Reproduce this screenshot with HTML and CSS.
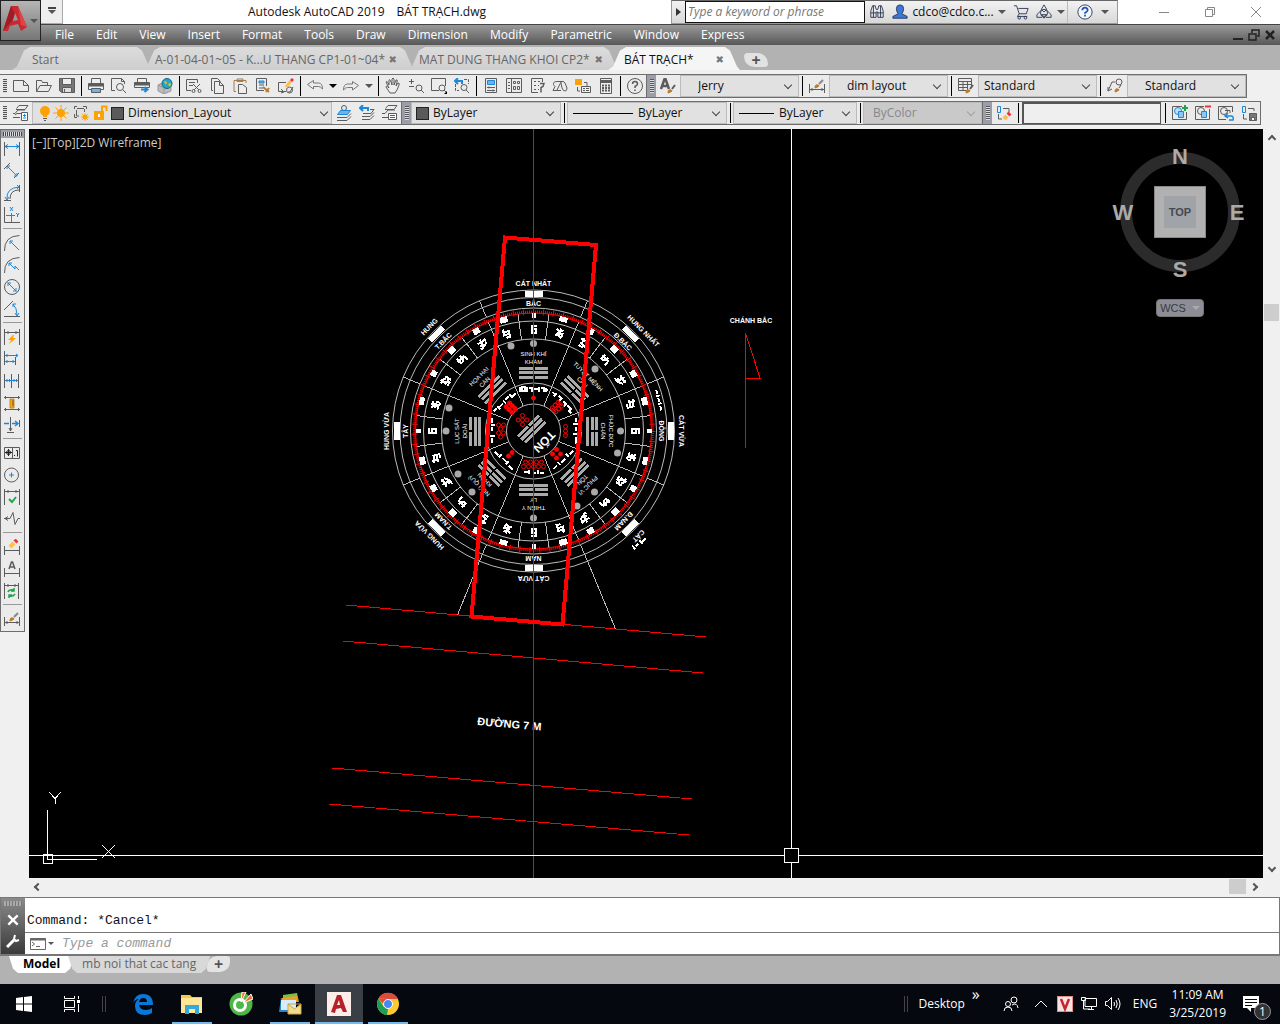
FILE: index.html
```html
<!DOCTYPE html>
<html lang="en">
<head>
  <meta charset="UTF-8" />
  <meta name="viewport" content="width=device-width, initial-scale=1.0"/>
  <title>Autodesk AutoCAD 2019 - BÁT TRẠCH.dwg</title>
  <link rel="stylesheet" href="styles.css">
</head>
<body>

  <!-- Icon sprite -->
  <svg class="sprite" aria-hidden="true">
    <symbol id="i-new" viewBox="0 0 16 16"><path d="M.5 2.500h10l5 5v6H.5zM10.500 2.500v5h5"/></symbol>
    <symbol id="i-open" viewBox="0 0 16 16"><path d="M.5 13.500V2.500h5l1 2h5v3M.5 13.500l3.500-6h11.500l-3 6z"/></symbol>
    <symbol id="i-save" viewBox="0 0 16 16"><path d="M.5.5h15v14h-13l-2-2z" fill="#777"/><path d="M3.500.5h9v6h-9z" fill="#eee"/><path d="M3.500 9.500h9v5h-9z" fill="#ddd"/><path d="M5.500 11v3"/></symbol>
    <symbol id="i-print" viewBox="0 0 16 16"><path d="M3.500 5V.5h9V5M.5 5.500h15v6H.5z" fill="#eee"/><path d="M1 7h14" stroke-width="3"/><path d="M3.500 10.500h9v4h-9z" fill="#6db3ea"/></symbol>
    <symbol id="i-preview" viewBox="0 0 16 16"><path d="M4 12.500H.5V.5h10l3 3V6M10.500.5v3h3"/><circle cx="9" cy="9" r="3.500" fill="#eee"/><path d="M12 12l3 3"/></symbol>
    <symbol id="i-publish" viewBox="0 0 16 16"><path d="M3.500 4V.5h9V4M.5 4.500h15v5H.5z" fill="#eee"/><path d="M1 6h14" stroke-width="3"/><path d="M7 11.500h6M10.500 9l3 2.500-3 2.500" class="blue" stroke-width="2"/></symbol>
    <symbol id="i-globe" viewBox="0 0 16 16"><path d="M1 7l6-3 7 3v6l-7 3-6-3z" fill="#bbb" stroke="#999"/><path d="M1 7l6 3v6" stroke="#999"/><circle cx="10" cy="5.500" r="5" fill="#27a6c4" stroke="#168"/><path d="M7 3l3 1-1 3zM11 6l3-1-1 4z" fill="#f4c430" stroke="none"/></symbol>
    <symbol id="i-cut" viewBox="0 0 16 16"><path d="M5 12.500H.5V1.500h11V5M3 4.500h6M3 7.500h4M7 6l6 6M14 6l-6 6"/><circle cx="7.500" cy="13" r="1.500"/><circle cx="13.500" cy="13" r="1.500"/></symbol>
    <symbol id="i-copy" viewBox="0 0 16 16"><path d="M4 12.500H2.500V.5h6l3 3"/><path d="M5.500 3.500h5l4 4v8h-9zM10.500 3.500v4h4"/></symbol>
    <symbol id="i-paste" viewBox="0 0 16 16"><path d="M4 13.500H2V2.500h12V5M5 3.500h6V1H5z" stroke="#a57c4c"/><path d="M6.500 6.500h4l4 3v6h-8z" fill="#eee"/></symbol>
    <symbol id="i-match" viewBox="0 0 16 16"><path d="M9 12.500H1.500V.5h10V8M4 7h5M4 10h4"/><path d="M4 3h5v2H4z" fill="#6db3ea" stroke="#1e88d8"/><path d="M8 9l6 5M11 14l3-4" stroke="#b97b2d" stroke-width="2"/></symbol>
    <symbol id="i-block" viewBox="0 0 16 16"><path d="M8 4.500H.5v9H8M3 11l3 3-3 1M15 9l-3 5h-2"/><circle cx="11.500" cy="12" r="3"/><path d="M8 9l5-6" stroke="#fbc04d" stroke-width="3"/><path d="M13 3l2-2" stroke="#e33" stroke-width="3"/></symbol>
    <symbol id="i-undo" viewBox="0 0 16 16"><path d="M.5 6.500l6-4v2.500h5q4 0 4 6-2-2.500-4-2.500h-5v2.500z" stroke="#777"/></symbol>
    <symbol id="i-redo" viewBox="0 0 16 16"><path d="M15.500 7.500l-6-4v2.500h-5q-4 0-4 6 2-2.500 4-2.500h5V12z" stroke="#777"/></symbol>
    <symbol id="i-pan" viewBox="0 0 16 16"><path d="M5 15L1 9q0-2 3 1L1 4q1-2 3 3L4 2q1-2 3 5V1q1-2 2 0v6l2-5q2-1 1 2l-1 4 2-3q2 0 1 2l-2 5-2 3z" fill="#eee"/></symbol>
    <symbol id="i-zoomrt" viewBox="0 0 16 16"><path d="M1 3.500h5M3.500 1v5M1 8.500h5"/><circle cx="11" cy="10" r="3"/><path d="M13 12l3 3"/></symbol>
    <symbol id="i-zoomwin" viewBox="0 0 16 16"><path d="M8 12.500H.5V.5h14V8"/><circle cx="11" cy="10" r="3" fill="#eee"/><path d="M13 12l2 2"/><path d="M13 16h3v-3z" fill="#000" stroke="none"/></symbol>
    <symbol id="i-zoomprev" viewBox="0 0 16 16"><path d="M10 1.500h4.500V6M1.500 6v6.500H5" stroke-dasharray="3 1"/><path d="M1 3h7v3M4 0L1 3l3 3" class="blue" stroke-width="2"/><circle cx="10" cy="9.500" r="3"/><path d="M12 12l3 3"/></symbol>
    <symbol id="i-props" viewBox="0 0 16 16"><path d="M2.500.5h11v14h-11zM4 9.500h8M4 12.500h8M6 8.500v2M10 11.500v2"/><path d="M4.500 2.500h7v4h-7z" fill="#6db3ea" stroke="#1e88d8"/></symbol>
    <symbol id="i-design" viewBox="0 0 16 16"><path d="M.5.5h15v14H.5zM5.500.5v14M2 4.500h2M2 7.500h2M2 10.500h2"/><path d="M7.500 3.500h2v2h-2zM11.500 3.500h2v2h-2zM7.500 8.500h2v3h-2zM11.500 8.500h2v3h-2z"/></symbol>
    <symbol id="i-palette" viewBox="0 0 16 16"><path d="M9 14.500H2.500V.5h11V4M5 3.500h2M9 3.500h2M5 7.500h2M5 11.500h2M9 7.500h1M9 11.500h1"/><path d="M11 5.500h4l-1 3-2 1v5" stroke-width="1.500"/></symbol>
    <symbol id="i-sheet" viewBox="0 0 16 16"><path d="M11 3.500H5q-4 0-3.500 3 .5 1 1.500 2l-2 4h8M5 12l4-8q2-2 4 1l2 5q0 3-2 3t-3-3L9 5"/></symbol>
    <symbol id="i-markup" viewBox="0 0 16 16"><path d="M0 1h7v6H0z" fill="#ffa200" stroke="none"/><path d="M9 4.500h3V9M2.500 9v4H5"/><path d="M6.500 8.500h9v6h-9zM8 10.500h2M8 12.500h2M11 10.500h3M11 12.500h3" fill="#eee"/></symbol>
    <symbol id="i-calc" viewBox="0 0 16 16"><path d="M2.500.5h11v15h-11z" fill="#eee"/><path d="M3 3.500h10" stroke-width="3"/><path d="M4 7.500h8M4 10h8M4 12.500h8" stroke-dasharray="2 1" stroke-width="2"/></symbol>
    <symbol id="i-help" viewBox="0 0 16 16"><circle cx="8" cy="8" r="7.500"/><path d="M5.500 6q0-2.500 2.500-2.500T10.500 6Q10.500 7 8 8.500V10M8 11.500v1.500" stroke-width="1.500"/></symbol>
    <symbol id="i-textstyle" viewBox="0 0 16 16"><path d="M1 11L4.500 1h1L9 11M2.500 8h5" stroke-width="2.500"/><path d="M8 15q0-4 3-3t-3 3" fill="#b97b2d" stroke="#b97b2d"/><path d="M12 11l3-4" stroke-width="2"/></symbol>
    <symbol id="i-dimstyle" viewBox="0 0 16 16"><path d="M.5 6v9M15.500 6v9M1 11.500h14M3 10v3M13 10v3"/><path d="M6 10q0-4 3-3t-3 3" fill="#b97b2d" stroke="#b97b2d"/><path d="M10 6l4-4" stroke="#888" stroke-width="2"/></symbol>
    <symbol id="i-tablestyle" viewBox="0 0 16 16"><path d="M10 12.500H.5V.5h13V8M.5 3.500h13M.5 6.500h13M.5 9.500h9M5 3.500v9M9.500 3.500v9"/><path d="M8 15q0-4 3-3t-3 3" fill="#b97b2d" stroke="#b97b2d"/><path d="M12 11l3-4" stroke-width="2"/></symbol>
    <symbol id="i-leader" viewBox="0 0 16 16"><path d="M1 13L5 4h3M1 9v4l4-2"/><circle cx="12" cy="4" r="3"/><path d="M8 14q0-4 3-3t-3 3" fill="#b97b2d" stroke="#b97b2d"/><path d="M12 10l2-3"/></symbol>
    <symbol id="i-layers" viewBox="0 0 16 16"><path d="M3.500 3.500L6 .5h9l-3 4H3M0 8.500h2L5 5h7M0 12.500h7M2 10l2-1.500h4"/><path d="M8.500 7.500h6v8h-6z" fill="#fff"/><path d="M10 10.500h3M10 13h3M11.500 9v3" class="blue"/></symbol>
    <symbol id="i-bulb" viewBox="0 0 16 16"><circle cx="8" cy="6" r="5" fill="#ffa200" stroke="none"/><path d="M6 10h4v2H6z" fill="#ffa200" stroke="none"/><path d="M6 13.500h4M7 15.500h2"/></symbol>
    <symbol id="i-sun" viewBox="0 0 16 16"><circle cx="8" cy="8" r="4" fill="#ffa200" stroke="none"/><path d="M8 0v16M0 8h16M2.500 2.500l11 11M13.500 2.500l-11 11" stroke="#ffa200"/></symbol>
    <symbol id="i-vpfreeze" viewBox="0 0 16 16"><path d="M4 1.500H1.500V4M10 1.500h3.500V4M1.500 9v3.500H4M4 3.500h7M3.500 5v6H6M11.500 4v3"/><circle cx="12" cy="12" r="2.500" fill="#ffa200" stroke="none"/><path d="M12 8v8M8 12h8M9 9l6 6M15 9l-6 6" stroke="#ffa200" stroke-width=".8"/></symbol>
    <symbol id="i-lock" viewBox="0 0 16 16"><path d="M1 6h10v9H1z" fill="#ffa200" stroke="none"/><path d="M9 6V1.500h4.500V6" stroke="#ffa200" stroke-width="2"/><path d="M6 9v3" stroke="#fff" stroke-width="2"/></symbol>
    <symbol id="i-laycur" viewBox="0 0 16 16"><circle cx="8" cy="3" r="2.500"/><path d="M4.500 5.500h10l-3 4h-10z" fill="#6db3ea" stroke="#1e88d8"/><path d="M1 12.500h10l4-4M1 15.500h10l4-4"/></symbol>
    <symbol id="i-layprev" viewBox="0 0 16 16"><path d="M1 3h8v3M4 0L1 3l3 3" class="blue" stroke-width="2"/><path d="M11 4.500h4l-3 4H4M3 11.500h8l4-4M3 14.500h8l4-4"/></symbol>
    <symbol id="i-laystate" viewBox="0 0 16 16"><path d="M3.500 3.500L6 .5h9l-3 4H3M0 8.500h3L6 5h7M0 12.500h6"/><path d="M6.500 8.500h8v6h-8zM8 10.500h5M8 12.500h5" fill="#fff"/></symbol>
    <symbol id="i-refedit" viewBox="0 0 16 16"><path d="M1.500 5V1.500h3v6h-3V4" class="blue"/><path d="M7 3.500h6V7M2.500 9v5H6"/><path d="M8 14l3-3" stroke="#fbc04d" stroke-width="4"/><path d="M12 10l2-2" stroke="#e33" stroke-width="4"/></symbol>
    <symbol id="i-refadd" viewBox="0 0 16 16"><path d="M10 1.500H.5v13h14V7"/><circle cx="6" cy="6" r="3.500" fill="#bfe0f8" class="blue"/><path d="M6.500 6.500h5v6h-5z" fill="#8cc6f2" stroke="#1e88d8"/><path d="M13 0v6M10 3h6" stroke="#1ea54a" stroke-width="2"/></symbol>
    <symbol id="i-refrem" viewBox="0 0 16 16"><path d="M9 1.500H.5v13h14V4"/><circle cx="6" cy="6" r="3.500"/><path d="M6.500 6.500h5v6h-5z" fill="#8cc6f2" stroke="#1e88d8"/><path d="M10 1.500h6" stroke="#e33" stroke-width="2"/></symbol>
    <symbol id="i-refclose" viewBox="0 0 16 16"><path d="M8 14.500H.5v-13h14V7"/><circle cx="6" cy="6" r="3.500"/><path d="M7 5.500h5V8"/><path d="M10 8l-3 3 3 2M7 11h6q3 0 2 4h-4" class="blue" stroke-width="1.500"/></symbol>
    <symbol id="i-refsave" viewBox="0 0 16 16"><path d="M1.500 5V1.500h3v6h-3V4" class="blue"/><path d="M7 3.500h6V6M2.500 9v5H6"/><path d="M8.500 8.500h7v7h-7z" fill="#777"/><path d="M10.500 12.500h3v3h-3z" fill="#fff"/></symbol>

    <!-- dimension toolbar -->
    <symbol id="d-linear" viewBox="0 0 16 16"><path d="M.5 1v14M15.500 1v14"/><path d="M1 5.500h14M4 3.500l-3 2 3 2M12 3.500l3 2-3 2" class="blue"/></symbol>
    <symbol id="d-aligned" viewBox="0 0 16 16"><path d="M0 6l6-6M10 15l5-5"/><path d="M3 3l10 10M3 6V3h3M10 13h3v-3" class="blue"/></symbol>
    <symbol id="d-arc" viewBox="0 0 16 16"><path d="M0 15.500h7M15.500 0v7M6 14q0-9 9-9"/><path d="M3 14Q2 3 15 2M1 12l2 3 2-3M13 0l2 2-2 2" class="blue"/></symbol>
    <symbol id="d-ordinate" viewBox="0 0 16 16"><path d="M.5 0v15.500H16"/><path d="M2 8.500h9M7.500 6v9M6 0l3 4M9 0L6 4M12 6l2 2 1-2M13.500 8v2" class="blue"/></symbol>
    <symbol id="d-radius" viewBox="0 0 16 16"><path d="M.5 16Q0 1 15.500.5"/><path d="M15 15L6 6M6 9V6h3" class="blue"/></symbol>
    <symbol id="d-jogged" viewBox="0 0 16 16"><path d="M.5 16Q0 1 15.500.5"/><path d="M15 13l-4-4v3L5 6M5 9V6h3" class="blue"/></symbol>
    <symbol id="d-diameter" viewBox="0 0 16 16"><circle cx="8" cy="8" r="7.500"/><path d="M3.500 3.500l9 9M4 7V4h3M9 12h3V9" class="blue"/></symbol>
    <symbol id="d-angular" viewBox="0 0 16 16"><path d="M0 9l9-9M0 15.500h16"/><path d="M9 3q4 4 4 11M9 6V3h3M11 12l2 3 2-3" class="blue"/></symbol>
    <symbol id="d-quick" viewBox="0 0 16 16"><path d="M.5 0v16M15.500 0v16M1 3.500h14M4 2v3M12 2v3"/><path d="M9 6l-5 5h3l-2 4 7-6H9l1-3z" fill="#ffa200" stroke="none"/></symbol>
    <symbol id="d-baseline" viewBox="0 0 16 16"><path d="M.5 0v14M11.500 6v8"/><path d="M1 4.500h13M3 3v3M12 3l2 1.500L12 6M1 10.500h10M3 9v3M9 9v3" class="blue"/></symbol>
    <symbol id="d-continue" viewBox="0 0 16 16"><path d="M.5 1v14M7.500 1v14M14.500 1v14"/><path d="M1 7.500h13M3 6v3M5.500 6v3M10 6v3M12.500 6v3" class="blue"/></symbol>
    <symbol id="d-space" viewBox="0 0 16 16"><path d="M0 2.500h16M0 14.500h16M1.500 1v3M14.500 1v3M1.500 13v3M14.500 13v3"/><path d="M6 4h4v9H6z" fill="#ffa200" stroke="#c78a1a"/><path d="M8 6h2M8 8h2M8 10h2"/></symbol>
    <symbol id="d-break" viewBox="0 0 16 16"><path d="M6.500 0v14M3 15.500h7M5 11l1.500 3L8 11M15.500 3v7"/><path d="M0 6.500h5M8 6.500h6M11 4l3 2.500L11 9" class="blue" stroke-width="1.500"/></symbol>
    <symbol id="d-tolerance" viewBox="0 0 16 16"><path d="M.5 2.500h15v11H.5zM8.500 3v10"/><path d="M4.500 4v7M1 7.500h7M10 10.500h1M12 5.500h1.500v6" stroke="#222"/><circle cx="4.500" cy="7.500" r="2" stroke="#222"/></symbol>
    <symbol id="d-center" viewBox="0 0 16 16"><circle cx="7.500" cy="8" r="7"/><path d="M5 8h5M7.500 5.500v5" class="blue"/></symbol>
    <symbol id="d-inspect" viewBox="0 0 16 16"><path d="M.5 0v16M15.500 0v16M1 2.500h14M4 1v3M12 1v3"/><path d="M5 10l3 3 4-5" stroke="#1ea54a" stroke-width="2"/></symbol>
    <symbol id="d-jogline" viewBox="0 0 16 16"><path d="M0 7.500h6l3-6 2 12 3-6h2M4 5.500l-3 2 3 2"/></symbol>
    <symbol id="d-edit" viewBox="0 0 16 16"><path d="M.5 7v9M15.500 7v9M1 11.500h14"/><path d="M6 8l4-4" stroke="#fbc04d" stroke-width="4"/><path d="M11 3l2-2" stroke="#e33" stroke-width="4"/></symbol>
    <symbol id="d-text" viewBox="0 0 16 16"><path d="M.5 7v9M15.500 7v9M1 12.500h14"/><path d="M5 8l2.500-7h1L11 8M6 6h4" stroke-width="1.500"/></symbol>
    <symbol id="d-update" viewBox="0 0 16 16"><path d="M.5 0v16M14.500 0v16M1 2.500h13M4 1v3M11 1v3"/><path d="M4 9q1-3 6-2M10 5v3H7M11 11q-2 3-6 2M5 15v-3h3" stroke="#1ea54a" stroke-width="1.500"/></symbol>

    <symbol id="i-logo" viewBox="0 0 24 26"><path d="M0 26L8 1h7l9 21-6 4-3-7-8 2-2 5z" fill="#c92a30"/><path d="M8 1l4 8-3 7-9 10z" fill="#a01c24"/><path d="M12 8l3 7-5 1z" fill="#999"/><path d="M15 1l9 21-6-2z" fill="#e0444a"/></symbol>
  </svg>

  <header class="top">
    <button class="app-button" aria-label="Application menu">
      <svg class="logo"><use href="#i-logo"/></svg>
      <span class="caret"></span>
    </button>
    <div class="bars">
      <div class="titlebar">
        <button class="quick" aria-label="Customize Quick Access Toolbar"><span class="caret lined"></span></button>
        <h1><span>Autodesk AutoCAD 2019</span><span>BÁT TRẠCH.dwg</span></h1>
        <div class="infocenter">
          <button class="flip" aria-label="Collapse search"></button>
          <input type="text" aria-label="Search" placeholder="Type a keyword or phrase">
          <button aria-label="Search help"><svg class="ico18 navy" viewBox="0 0 18 18"><path d="M2 8l2-6h3l1 4h2l1-4h3l2 6v7h-6V9H8v6H2zM2 10h6M10 10h6M5 2v13M13 2v13"/></svg></button>
          <button class="account"><svg class="ico18 navy" viewBox="0 0 18 18"><path d="M9 1q4 0 4 4t-2 6l6 3v2H1v-2l6-3Q5 9 5 5t4-4z" fill="#3c78d8"/></svg> cdco@cdco.c... <span class="caret"></span></button>
          <button class="wide" aria-label="App store"><svg class="ico18 navy" viewBox="0 0 18 18"><path d="M1 2h3l3 9h8l2-6H6M7 11l-2 3h11"/><circle cx="7" cy="15.500" r="1.500"/><circle cx="14" cy="15.500" r="1.500"/></svg></button>
          <button class="drop" aria-label="Autodesk account"><svg class="ico18 navy" viewBox="0 0 18 18"><path d="M9 1l3 5-3 3-3-3zM6 7l-5 5v3h6M12 7l5 5v3h-6M6 12h6l-3 4z"/><circle cx="9" cy="10" r="4"/></svg><span class="caret"></span></button>
          <button class="drop last" aria-label="Help"><svg class="ico18 navy" viewBox="0 0 18 18"><circle cx="9" cy="9" r="8" fill="#f4f6fb"/><path d="M6 7q0-3 3-3t3 3q0 1-3 3v1M9 12v2" stroke="#2356b5" stroke-width="2"/></svg><span class="caret"></span></button>
        </div>
        <div class="window-buttons">
          <button aria-label="Minimize"><svg viewBox="0 0 10 10"><path d="M0 5.500h10"/></svg></button>
          <button aria-label="Restore"><svg viewBox="0 0 10 10"><path d="M.5 2.500h7v7h-7zM2.500 2V.5h7v7H8"/></svg></button>
          <button aria-label="Close"><svg viewBox="0 0 10 10"><path d="M0 0l10 10M10 0L0 10"/></svg></button>
        </div>
      </div>
      <nav class="menubar">
        <a href="#">File</a><a href="#">Edit</a><a href="#">View</a><a href="#">Insert</a><a href="#">Format</a><a href="#">Tools</a><a href="#">Draw</a><a href="#">Dimension</a><a href="#">Modify</a><a href="#">Parametric</a><a href="#">Window</a><a href="#">Express</a>
        <div class="doc-buttons">
          <button aria-label="Minimize drawing"><svg viewBox="0 0 12 12"><path d="M1 10h10"/></svg></button>
          <button aria-label="Restore drawing"><svg viewBox="0 0 12 12"><path d="M1 5h7v6H1zM4 4V1h7v6H9" stroke-width="1.500"/></svg></button>
          <button aria-label="Close drawing"><svg viewBox="0 0 12 12"><path d="M2 2l8 8M10 2l-8 8" stroke-width="2.500"/></svg></button>
        </div>
      </nav>
    </div>
  </header>

  <nav class="file-tabs">
    <a href="#" class="tab start">Start</a>
    <a href="#" class="tab">A-01-04-01~05 - K...U THANG CP1-01~04* <b>✖</b></a>
    <a href="#" class="tab">MAT DUNG THANG KHOI CP2* <b>✖</b></a>
    <a href="#" class="tab active">BÁT TRẠCH* <b>✖</b></a>
    <button class="add-tab" aria-label="New tab">+</button>
  </nav>

  <div class="toolbars">
    <div class="row">
      <div class="toolbar">
        <span class="grip"></span>
        <button aria-label="New"><svg><use href="#i-new"/></svg></button>
        <button aria-label="Open"><svg><use href="#i-open"/></svg></button>
        <button aria-label="Save"><svg><use href="#i-save"/></svg></button>
        <span class="sep"></span>
        <button aria-label="Plot"><svg><use href="#i-print"/></svg></button>
        <button aria-label="Plot preview"><svg><use href="#i-preview"/></svg></button>
        <button aria-label="Publish"><svg><use href="#i-publish"/></svg></button>
        <button aria-label="3D print"><svg><use href="#i-globe"/></svg></button>
        <span class="sep"></span>
        <button aria-label="Cut"><svg><use href="#i-cut"/></svg></button>
        <button aria-label="Copy"><svg><use href="#i-copy"/></svg></button>
        <button aria-label="Paste"><svg><use href="#i-paste"/></svg></button>
        <button aria-label="Match properties"><svg><use href="#i-match"/></svg></button>
        <button aria-label="Block editor"><svg><use href="#i-block"/></svg></button>
        <span class="sep"></span>
        <button aria-label="Undo"><svg><use href="#i-undo"/></svg></button>
        <button class="more" aria-label="Undo list"><span class="caret black"></span></button>
        <button aria-label="Redo"><svg><use href="#i-redo"/></svg></button>
        <button class="more" aria-label="Redo list"><span class="caret"></span></button>
        <span class="sep"></span>
        <button aria-label="Pan"><svg><use href="#i-pan"/></svg></button>
        <button aria-label="Zoom realtime"><svg><use href="#i-zoomrt"/></svg></button>
        <button aria-label="Zoom window"><svg><use href="#i-zoomwin"/></svg></button>
        <button aria-label="Zoom previous"><svg><use href="#i-zoomprev"/></svg></button>
        <span class="sep"></span>
        <button aria-label="Properties"><svg><use href="#i-props"/></svg></button>
        <button aria-label="DesignCenter"><svg><use href="#i-design"/></svg></button>
        <button aria-label="Tool palettes"><svg><use href="#i-palette"/></svg></button>
        <button aria-label="Sheet set manager"><svg><use href="#i-sheet"/></svg></button>
        <button aria-label="Markup set manager"><svg><use href="#i-markup"/></svg></button>
        <button aria-label="QuickCalc"><svg><use href="#i-calc"/></svg></button>
        <span class="sep"></span>
        <button aria-label="Help"><svg><use href="#i-help"/></svg></button>
      </div>
      <div class="toolbar styles">
        <span class="grip dark"></span>
        <button aria-label="Text style"><svg><use href="#i-textstyle"/></svg></button>
        <div class="combo inset"><select aria-label="Text style"><option>Jerry</option></select></div>
        <span class="sep"></span>
        <button aria-label="Dimension style"><svg><use href="#i-dimstyle"/></svg></button>
        <div class="combo inset"><select aria-label="Dimension style"><option>dim layout</option></select></div>
        <span class="sep"></span>
        <button aria-label="Table style"><svg><use href="#i-tablestyle"/></svg></button>
        <div class="combo"><select aria-label="Table style"><option>Standard</option></select></div>
        <span class="sep"></span>
        <button aria-label="Multileader style"><svg><use href="#i-leader"/></svg></button>
        <div class="combo inset"><select aria-label="Multileader style"><option>Standard</option></select></div>
      </div>
    </div>

    <div class="row">
      <div class="toolbar">
        <span class="grip"></span>
        <button aria-label="Layer properties"><svg><use href="#i-layers"/></svg></button>
        <div class="combo layer">
          <svg><use href="#i-bulb"/></svg><svg><use href="#i-sun"/></svg><svg class="gap"><use href="#i-vpfreeze"/></svg><svg class="gap"><use href="#i-lock"/></svg>
          <span class="swatch"></span>
          <select aria-label="Layer"><option>Dimension_Layout</option></select>
        </div>
        <button aria-label="Make object's layer current"><svg><use href="#i-laycur"/></svg></button>
        <button aria-label="Layer previous"><svg><use href="#i-layprev"/></svg></button>
        <button aria-label="Layer states"><svg><use href="#i-laystate"/></svg></button>
      </div>
      <div class="toolbar">
        <span class="grip dark"></span>
        <div class="combo color"><span class="swatch"></span><select aria-label="Color"><option>ByLayer</option></select></div>
        <span class="sep"></span>
        <div class="combo linetype"><i class="line"></i><select aria-label="Linetype"><option>ByLayer</option></select></div>
        <span class="sep"></span>
        <div class="combo weight"><i class="line"></i><select aria-label="Lineweight"><option>ByLayer</option></select></div>
        <span class="sep"></span>
        <div class="combo plot disabled"><select aria-label="Plot style" disabled><option>ByColor</option></select></div>
      </div>
      <div class="toolbar">
        <span class="grip dark"></span>
        <button aria-label="Edit reference"><svg><use href="#i-refedit"/></svg></button>
        <span class="sep"></span>
        <input type="text" class="refname" aria-label="Reference name">
        <span class="sep"></span>
        <button aria-label="Add to working set"><svg><use href="#i-refadd"/></svg></button>
        <button aria-label="Remove from working set"><svg><use href="#i-refrem"/></svg></button>
        <button aria-label="Close reference"><svg><use href="#i-refclose"/></svg></button>
        <button aria-label="Save reference edits"><svg><use href="#i-refsave"/></svg></button>
      </div>
    </div>
  </div>

  <main class="workspace">
    <div class="dim-toolbar">
      <span class="grip-h"></span>
      <button aria-label="Linear"><svg><use href="#d-linear"/></svg></button>
      <button aria-label="Aligned"><svg><use href="#d-aligned"/></svg></button>
      <button aria-label="Arc length"><svg><use href="#d-arc"/></svg></button>
      <button aria-label="Ordinate"><svg><use href="#d-ordinate"/></svg></button>
      <hr>
      <button aria-label="Radius"><svg><use href="#d-radius"/></svg></button>
      <button aria-label="Jogged"><svg><use href="#d-jogged"/></svg></button>
      <button aria-label="Diameter"><svg><use href="#d-diameter"/></svg></button>
      <button aria-label="Angular"><svg><use href="#d-angular"/></svg></button>
      <hr>
      <button aria-label="Quick dimension"><svg><use href="#d-quick"/></svg></button>
      <button aria-label="Baseline"><svg><use href="#d-baseline"/></svg></button>
      <button aria-label="Continue"><svg><use href="#d-continue"/></svg></button>
      <button aria-label="Dimension space"><svg><use href="#d-space"/></svg></button>
      <button aria-label="Dimension break"><svg><use href="#d-break"/></svg></button>
      <hr>
      <button aria-label="Tolerance"><svg><use href="#d-tolerance"/></svg></button>
      <button aria-label="Center mark"><svg><use href="#d-center"/></svg></button>
      <button aria-label="Inspection"><svg><use href="#d-inspect"/></svg></button>
      <button aria-label="Jogged linear"><svg><use href="#d-jogline"/></svg></button>
      <hr>
      <button aria-label="Dimension edit"><svg><use href="#d-edit"/></svg></button>
      <button aria-label="Dimension text edit"><svg><use href="#d-text"/></svg></button>
      <button aria-label="Dimension update"><svg><use href="#d-update"/></svg></button>
      <hr>
      <button aria-label="Dimension style"><svg><use href="#i-dimstyle"/></svg></button>
    </div>

    <div class="viewport">
      <svg class="drawing" viewBox="29 129 1234 749">
        <defs>
          <g id="yao"><path d="M-14.500 0h29"/></g>
          <g id="yin"><path d="M-14.500 0h13.500M1 0h13.500"/></g>
          <!-- one quarter of the 24 mountains -->
          <g id="quarter">
            <g transform="rotate(0)"><path class="blk" d="M-2-118h4v5h-4z"/><path class="ink" d="M-3-105h6M-3-102h6M-3-98h6M-2-105v7M2-103v5"/></g>
            <g transform="rotate(15)"><path class="blk" d="M-4-118h8v5h-8z"/><path class="ink" d="M-4-105l3 2 4-2M-3-101h7M-4-98l3-1 4 2M0-106v8M3-102v4"/></g>
            <g transform="rotate(30)"><path class="blk" d="M-3-118h6v6h-6z"/><path class="ink" d="M-5-104h4l3 2M-4-100l5 1 3-3M-2-106v6M3-104v7M-4-97h5"/></g>
            <g transform="rotate(45)"><path class="blk" d="M-4-118h7v6h-7z"/><path class="ink" d="M-5-102h9M-4-99h3l4-4M-3-105v7M1-105v4M4-101v4"/></g>
            <g transform="rotate(60)"><path class="blk" d="M-3-118h7v6h-7z"/><path class="ink" d="M-5-103h5l4-1M-4-100l4 2 4-3M-1-106v8M3-105v3M-5-97h4"/></g>
            <g transform="rotate(75)"><path class="blk" d="M-4-118h8v6h-8z"/><path class="ink" d="M-5-104l4 1h4M-5-100h8M-3-106v6M2-103v6M-2-97h5"/></g>
          </g>
          <g id="cells"><path transform="rotate(7.500)" d="M0-92v-26"/><path transform="rotate(22.500)" d="M0-92v-26"/><path transform="rotate(37.500)" d="M0-92v-26"/></g>
          <path id="spoke" d="M0-27v-65M0-123v-18"/>
          <path id="plate" d="M-9-140h18v6h-18z"/>
        </defs>

        <!-- roads -->
        <g class="red">
          <path d="M346 605l360 32M343 641l360 32M332 768l360 31M329 804l360 31"/>
          <path d="M745.500 448V333l14.500 45h-15"/>
        </g>
        <text class="road" transform="translate(477 725) rotate(5)">ĐƯỜNG 7 M</text>
        <text class="lbl mid" x="751" y="323">CHÁNH BẮC</text>

        <!-- compass -->
        <g transform="translate(533.500 431)">
          <g class="thin">
            <circle r="141"/><circle r="133.500"/><circle r="123"/><circle r="110"/><circle r="92"/><circle r="48"/><circle r="27"/>
            <use href="#spoke" transform="rotate(22.500)"/><use href="#spoke" transform="rotate(67.500)"/>
            <use href="#spoke" transform="rotate(112.500)"/><use href="#spoke" transform="rotate(157.500)"/>
            <use href="#spoke" transform="rotate(202.500)"/><use href="#spoke" transform="rotate(247.500)"/>
            <use href="#spoke" transform="rotate(292.500)"/><use href="#spoke" transform="rotate(337.500)"/>
            <use href="#cells"/><use href="#cells" transform="rotate(45)"/><use href="#cells" transform="rotate(90)"/>
            <use href="#cells" transform="rotate(135)"/><use href="#cells" transform="rotate(180)"/><use href="#cells" transform="rotate(225)"/>
            <use href="#cells" transform="rotate(270)"/><use href="#cells" transform="rotate(315)"/>
            <path d="M-54 130l-22 54M54 130l28 68"/>
          </g>
          <circle class="ring" r="118"/>
          <circle class="ticks" r="119"/>
          <circle class="ticks long" r="119"/>
          <use href="#quarter"/><use href="#quarter" transform="rotate(90)"/><use href="#quarter" transform="rotate(180)"/><use href="#quarter" transform="rotate(270)"/>

          <g class="blk">
            <use href="#plate"/><use href="#plate" transform="rotate(45)"/><use href="#plate" transform="rotate(90)"/><use href="#plate" transform="rotate(135)"/>
            <use href="#plate" transform="rotate(180)"/><use href="#plate" transform="rotate(225)"/><use href="#plate" transform="rotate(270)"/><use href="#plate" transform="rotate(315)"/>
          </g>

          <g class="dots">
            <circle cy="-87.500" r="3.500"/><circle cx="-22.500" cy="-85" r="3.500"/><circle cx="61.500" cy="-62" r="3.500"/><circle cx="-84.500" cy="-23" r="3.500"/>
            <circle cx="-87.500" r="3.500"/><circle cx="87" r="3.500"/><circle cx="84" cy="22" r="3.500"/><circle cx="61" cy="61" r="3.500"/>
            <circle cx="43.500" cy="75" r="3.500"/><circle cy="87" r="3.500"/><circle cx="-75.500" cy="43" r="3.500"/><circle cx="-61.500" cy="61" r="3.500"/>
          </g>

          <!-- trigrams: outer, middle, inner line -->
          <g class="gua">
            <g><use href="#yin" y="-63"/><use href="#yao" y="-58.500"/><use href="#yin" y="-54"/></g>
            <g transform="rotate(45)"><use href="#yao" y="-63"/><use href="#yin" y="-58.500"/><use href="#yin" y="-54"/></g>
            <g transform="rotate(90)"><use href="#yin" y="-63"/><use href="#yin" y="-58.500"/><use href="#yao" y="-54"/></g>
            <g transform="rotate(135)"><use href="#yao" y="-63"/><use href="#yao" y="-58.500"/><use href="#yin" y="-54"/></g>
            <g transform="rotate(180)"><use href="#yao" y="-63"/><use href="#yin" y="-58.500"/><use href="#yao" y="-54"/></g>
            <g transform="rotate(225)"><use href="#yin" y="-63"/><use href="#yin" y="-58.500"/><use href="#yin" y="-54"/></g>
            <g transform="rotate(270)"><use href="#yin" y="-63"/><use href="#yao" y="-58.500"/><use href="#yao" y="-54"/></g>
            <g transform="rotate(315)"><use href="#yao" y="-63"/><use href="#yao" y="-58.500"/><use href="#yao" y="-54"/></g>
            <g transform="rotate(135)"><use href="#yao" y="-2"/><use href="#yao" y="2.500"/><use href="#yin" y="7"/></g>
          </g>
          <text class="centre" transform="rotate(135)" y="-11">TỐN</text>

          <!-- inner band script -->
          <g class="script">
            <path d="M-14-44v4h2v-4h3v4h-2M-7-44v5M-5-43h3v4M0-42h4M5-44v5M7-43h3v4M12-43v4M14-41h-3"/>
            <path transform="rotate(45)" d="M-14-41h3M-10-43v4M-7-43h4v4M0-42h3M4-43v4M6-42h4M11-43v4h3"/>
            <path transform="rotate(90)" d="M-13-42h4M-7-44v5M-4-42h4M3-43v4M6-42h7"/>
            <path transform="rotate(135)" d="M-14-42h5M-7-43v4M-3-42h6M5-43v4M8-41h5"/>
            <path transform="rotate(180)" d="M-10-42h4M-4-43v4M-2-42h3M5-43v4M4-41h6"/>
            <path transform="rotate(225)" d="M-13-42h6M-4-43v4M-3-41h6M6-43v4M8-42h5"/>
            <path transform="rotate(270)" d="M-12-42h5M-5-44v5M0-42h4M6-43v4M8-42h5"/>
            <path transform="rotate(315)" d="M-14-42h4M-8-43v4M-7-41h5M0-43v4M2-42h5M9-43v4h5"/>
          </g>

          <!-- number dots of the inner band -->
          <g class="lo">
            <circle cy="-33" r="2" fill="red"/>
            <circle cx="-11" cy="-15.500" r="2"/><circle cx="-11" cy="-6.500" r="2"/><circle cx="-15.500" cy="-11" r="2"/><circle cx="-6.500" cy="-11" r="2"/><circle cx="-11" cy="-11" r="2"/>
            <g transform="translate(-23.500 -24) rotate(-45)" fill="red"><circle cx="-2.500" cy="-3" r="2"/><circle cx="2.500" cy="-3" r="2"/><circle cx="-2.500" cy="1" r="2"/><circle cx="2.500" cy="1" r="2"/><circle cx="-2.500" cy="5" r="2"/><circle cx="2.500" cy="5" r="2"/></g>
            <g transform="translate(23.500 -24) rotate(45)"><circle cx="-2.500" cy="-4" r="2"/><circle cx="2.500" cy="-4" r="2"/><circle cx="-2.500" r="2"/><circle cx="2.500" r="2"/><circle cx="-2.500" cy="4" r="2"/><circle cx="2.500" cy="4" r="2"/><path d="M-2.500-4h5M-2.500 4h5"/></g>
            <circle cx="-35" cy="-6" r="2"/><circle cx="-30" cy="-6" r="2"/><circle cx="-33" cy="-2" r="2"/><circle cx="-35" cy="2" r="2"/><circle cx="-30" cy="2" r="2"/><circle cx="-33" cy="6" r="2"/>
            <circle cx="32" cy="-4.500" r="2"/><circle cx="32" cy="0" r="2"/><circle cx="32" cy="4.500" r="2"/>
            <g fill="red"><circle cx="-25" cy="25" r="2"/><circle cx="-21.500" cy="21.500" r="2"/><circle cx="23" cy="18.500" r="2"/><circle cx="19" cy="23" r="2"/><circle cx="27" cy="23" r="2"/><circle cx="23" cy="27" r="2"/></g>
            <circle cx="-8" cy="31" r="2"/><circle cx="-3" cy="31" r="2"/><circle cx="3" cy="31" r="2"/><circle cx="8" cy="31" r="2"/>
            <circle cx="-10" cy="35.500" r="2"/><circle cx="-5" cy="35.500" r="2"/><circle cy="35.500" r="2"/><circle cx="5" cy="35.500" r="2"/><circle cx="10" cy="35.500" r="2"/>
          </g>

          <g class="lbl mid">
            <text y="-145">CÁT NHẤT</text>
            <text y="-125">BẮC</text>
            <text transform="rotate(45)" x="7" y="-146">HUNG NHẤT</text>
            <text transform="rotate(45)" y="-124">Đ.BẮC</text>
            <text transform="rotate(90)" y="-145">CÁT VỪA</text>
            <text transform="rotate(90)" y="-125">ĐÔNG</text>
            <text transform="rotate(135)" y="-146">CÁT</text>
            <text transform="rotate(135)" y="-125">Đ.NAM</text>
            <text transform="rotate(180)" y="-145">CÁT VỪA</text>
            <text transform="rotate(180)" y="-125">NAM</text>
            <text transform="rotate(225)" y="-145">HUNG VỪA</text>
            <text transform="rotate(225)" y="-125">T.NAM</text>
            <text transform="rotate(270)" y="-145">HUNG VỪA</text>
            <text transform="rotate(270)" y="-126">TÂY</text>
            <text transform="rotate(315)" y="-145">HUNG</text>
            <text transform="rotate(315)" y="-125">T.BẮC</text>
          </g>
          <g class="palace mid">
            <text y="-75">SINH KHÍ</text><text y="-67">KHẢM</text>
            <text transform="rotate(45)" y="-75">TUYỆT MỆNH</text><text transform="rotate(45)" y="-67">CẤN</text>
            <text transform="rotate(90)" y="-75">PHÚC ĐỨC</text><text transform="rotate(90)" y="-67">CHẤN</text>
            <text transform="rotate(135)" y="-75">PHỤC VỊ</text><text transform="rotate(135)" y="-67">TỐN</text>
            <text transform="rotate(180)" y="-75">THIÊN Y</text><text transform="rotate(180)" y="-67">LY</text>
            <text transform="rotate(225)" y="-75">NGŨ QUỶ</text><text transform="rotate(225)" y="-67">KHÔN</text>
            <text transform="rotate(270)" y="-75">LỤC SÁT</text><text transform="rotate(270)" y="-67">ĐOÀI</text>
            <text transform="rotate(315)" y="-75">HỌA HẠI</text><text transform="rotate(315)" y="-67">CÀN</text>
          </g>
          <g class="script">
            <path transform="rotate(76)" d="M-10-129h4M-4-131v4M-2-129h4M4-131v4M6-129h5"/>
            <path transform="rotate(137)" d="M-9-155h5M-3-157v5M0-154h4M6-156v5"/>
          </g>
        </g>

        <!-- lot outline and axis -->
        <path class="lot" d="M505 237.500l91 7.500-33.500 379.500-91-8z"/>
        <path class="red" d="M533.500 129v749"/>

        <!-- UCS icon and crosshair -->
        <g class="cursor">
          <path d="M29 855.500h755M798 855.500h465M791.500 129v720M791.500 862v16M784.500 848.500h14v14h-14z"/>
          <path d="M47.500 810v49.500H97M43.500 854.500h9v9h-9z"/>
          <path d="M49 792l6 6.500 6-6.500M55.500 798v6M102 845l13 13M115 845l-13 13"/>
        </g>
      </svg>

      <div class="view-controls"><a href="#">[−]</a><a href="#">[Top]</a><a href="#">[2D Wireframe]</a></div>

      <div class="viewcube">
        <svg viewBox="0 -4 136 144">
          <circle cx="68" cy="68" r="54"/>
          <text x="68" y="20">N</text><text x="125" y="76">E</text><text x="68" y="133">S</text><text x="11" y="76">W</text>
          <rect class="face" x="42.500" y="42.500" width="51" height="51"/>
          <rect class="patch" x="52" y="52" width="32" height="32"/>
          <text class="face-name" x="68" y="72">TOP</text>
        </svg>
        <button>WCS <span class="caret"></span></button>
      </div>
    </div>

    <div class="vscroll"><i class="arrow up"></i><span class="thumb"></span><i class="arrow down"></i></div>
    <div class="hscroll"><i class="arrow left"></i><span class="thumb"></span><i class="arrow right"></i></div>
  </main>

  <section class="command">
    <div class="handle">
      <span class="grip-h light"></span>
      <button aria-label="Close"><svg viewBox="0 0 12 12"><path d="M2 2l8 8M10 2l-8 8" stroke-width="2"/></svg></button>
      <button aria-label="Customize"><svg viewBox="0 0 14 14"><path d="M1 13l7-7" stroke-width="3"/><path d="M9 1L8 5l2 2 3-1" stroke-width="2"/></svg></button>
    </div>
    <div class="lines">
      <p>Command: *Cancel*</p>
      <label>
        <svg viewBox="0 0 16 12"><path d="M.5.5h15v11H.5z" fill="#fff"/><path d="M0 1.500h16" stroke-width="2"/><path d="M2 4l2.500 2L2 8M6 8.500h4"/></svg>
        <span class="caret"></span>
        <input type="text" aria-label="Command line" placeholder="Type a command">
      </label>
    </div>
  </section>

  <nav class="layout-tabs">
    <a href="#" class="active">Model</a>
    <a href="#">mb noi that cac tang</a>
    <button aria-label="New layout">+</button>
  </nav>

  <footer class="taskbar">
    <button aria-label="Start"><svg viewBox="0 0 16 16"><path fill="#fff" d="M0 2l7-1v6.500H0zM8 1l8-1v7.500H8zM0 8.500h7V15l-7-1zM8 8.500h8V16l-8-1z"/></svg></button>
    <button aria-label="Task view"><svg viewBox="0 0 16 16" class="stroke"><path d="M.5 0v2.500h10V0M.5 4.500h10v7H.5zM.5 16v-2.500h10V16M14.500 0v3M14.500 8v8"/><path d="M13 4h3v3h-3z" fill="#fff" stroke="none"/></svg></button>
    <span class="divider"></span>
    <button class="app first" aria-label="Edge"><svg class="big" viewBox="0 0 24 24"><path fill="#0a78d7" d="M2 11Q4 2 12 2q10 0 10 11H8q1 5 7 5 4 0 6-2v5q-3 2-7 2-10 0-10-9 0-5 4-7-4 0-6 4zM8 10h8q0-4-4-4-3 0-4 4z"/></svg></button>
    <button class="app open" aria-label="File Explorer"><svg class="big" viewBox="0 0 24 24"><path fill="#f5c94c" d="M1 3h9l2 2h10v16H1z"/><path fill="#ffe694" d="M1 6h21v15H1z"/><path fill="#35a8e0" d="M5 13h14v9h-4v-5H9v5H5z"/></svg></button>
    <button class="app" aria-label="Coc Coc"><svg class="big" viewBox="0 0 24 24"><circle cx="12" cy="12" r="11.500" fill="#4fb748"/><circle cx="11" cy="13" r="5.500" fill="none" stroke="#fff" stroke-width="3"/><path d="M12 10L13 0h4zM14 11l8-9 2 5z" fill="#f26a2e" stroke="#fff"/></svg></button>
    <button class="app open" aria-label="Mail"><svg class="big" viewBox="0 0 24 24"><path fill="#2a86c8" d="M1 20L3 6h15v14z"/><path fill="#7bc043" d="M5 3l14-2 2 9H5z"/><path fill="#f39a2d" d="M4 6l15-2v6H4z"/><path fill="#d6ecfa" d="M3 8h15v10H3z"/><path fill="#f4dc8a" stroke="#c9a544" d="M10 12h13v10H10zl6.500 5L23 12"/></svg></button>
    <button class="app open current" aria-label="AutoCAD"><svg class="big" viewBox="0 0 24 24"><path fill="#fdeee9" d="M0 0h24v24H0z"/><path d="M4 20L10 3h4l6 17h-4l-2-4-5 1-1 4z" fill="#b3222b"/><path d="M10 13l2-5 1 5z" fill="#fdeee9"/></svg></button>
    <button class="app open" aria-label="Chrome"><svg class="big" viewBox="0 0 24 24"><circle cx="12" cy="12" r="11" fill="#fbc934"/><path fill="#de4a3c" d="M2.500 6.500A11 11 0 0 1 22 7H12z"/><path fill="#1c9e57" d="M2.500 6.500l5 8L12 17l-1 6A11 11 0 0 1 2.500 6.500z"/><path fill="#de4a3c" d="M2.500 6.500L12 7l-4 6z"/><circle cx="12" cy="12" r="4.500" fill="#4688f4" stroke="#fff"/></svg></button>

    <div class="tray">
      <span class="divider"></span>
      <a href="#" class="desk">Desktop</a><span class="chev">»</span>
      <button aria-label="People"><svg class="stroke" viewBox="0 0 16 16"><circle cx="5" cy="8" r="2.500"/><circle cx="11" cy="4" r="3"/><path d="M1 15q0-4 4-4t4 4M9 9q5-3 6 3"/></svg></button>
      <button aria-label="Hidden icons" class="narrow"><svg class="stroke" viewBox="0 0 14 16"><path d="M1 11l6-6 6 6"/></svg></button>
      <button aria-label="Unikey" class="narrow"><svg viewBox="0 0 16 16"><path d="M0 0h16v16H0z" fill="#e98a8a"/><path d="M1 1h14v14H1z" fill="#f7e4e2"/><path d="M4 3l4 10 4-10" fill="none" stroke="#c6252c" stroke-width="2.500"/></svg></button>
      <button aria-label="Network" class="narrow"><svg class="stroke" viewBox="0 0 16 16"><path d="M4 2.500h11.500v8H4zM.5 1.500h4v3h-4zM2.500 5v8H9M7 13.500h6M10.500 11v2"/></svg></button>
      <button aria-label="Volume" class="narrow"><svg class="stroke" viewBox="0 0 16 16"><path d="M.5 5.500h2l4-4v12l-4-4h-2zM9 6q1 2 0 4M11 4q2.500 4 0 8M13 2q4 6 0 12"/></svg></button>
      <span class="lang">ENG</span>
      <time><span>11:09 AM</span><span>3/25/2019</span></time>
      <button class="notify" aria-label="Notifications"><svg viewBox="0 0 26 26"><path fill="#fff" d="M4 5h16v12h-8v4l-4-4H4z"/><path d="M6 8.500h12M6 11.500h12M6 14.500h7" stroke="#05090f"/></svg><em>1</em></button>
    </div>
  </footer>

</body>
</html>
```
FILE: styles.css
```css
:root {
  --ui: "Open Sans", "Noto Sans", sans-serif;
  --panel: #ebebeb;
  --edge: #6e6e6e;
  --icon: #5c5c5c;
  --blue: #1e88d8;
  --tabs: #b2b2b2;
}

* {
  box-sizing: border-box;
}

body {
  margin: 0;
  min-height: 100vh;
  display: flex;
  flex-direction: column;
  font-family: var(--ui);
  font-size: 12px;
  line-height: 16px;
  color: #111;
  background: #f0f0f0;
}

button, input, select {
  font: inherit;
  color: inherit;
  margin: 0;
  padding: 0;
  border: 0;
  background: none;
}

button {
  display: flex;
  align-items: center;
  justify-content: center;
}

a {
  color: inherit;
  text-decoration: none;
  white-space: nowrap;
}

.sprite {
  position: absolute;
  width: 0;
  height: 0;
}

.blue {
  stroke: var(--blue);
}

.caret {
  border: 4px solid transparent;
  border-top-color: #555;
  border-bottom: 0;
}

.caret.black {
  border-top-color: #000;
}

/* Title bar and menu */
.top {
  display: flex;
  height: 45px;
  background: #575757;
}

.app-button {
  width: 41px;
  height: 41px;
  gap: 3px;
  border: 1px solid #222;
  background: linear-gradient(#b5b5b5, #777);
}

.app-button .logo {
  width: 24px;
  height: 28px;
  margin-bottom: 6px;
}

.bars {
  flex: 1;
  display: flex;
  flex-direction: column;
}

.titlebar {
  display: flex;
  height: 24px;
  background: #fff;
}

.quick {
  width: 22px;
  background: #eee;
  border: 1px solid #aaa;
  border-width: 0 1px 1px 0;
}

.caret.lined {
  position: relative;
}

.caret.lined::before {
  content: "";
  position: absolute;
  top: -7px;
  left: -4px;
  width: 8px;
  height: 2px;
  background: #444;
}

.titlebar h1 {
  flex: 1;
  display: flex;
  justify-content: center;
  gap: 12px;
  margin: 0;
  font-size: 12px;
  font-weight: normal;
  line-height: 24px;
}

.infocenter {
  display: flex;
  width: 447px;
  border: 1px solid #999;
  border-top-color: #666;
  background: linear-gradient(#f2f2f2, #d8d8d8);
}

.infocenter button {
  width: 24px;
}

.infocenter .flip {
  width: 13px;
}

.flip::before {
  content: "";
  border: 4px solid transparent;
  border-left: 5px solid #333;
  border-right: 0;
}

.infocenter input {
  width: 180px;
  padding: 0 2px;
  border: 1px solid #111;
  background: #fff;
  font-style: italic;
}

::placeholder {
  color: #777;
  opacity: 1;
}

.infocenter .account {
  width: 120px;
  gap: 4px;
}

.infocenter .drop {
  width: 34px;
  gap: 5px;
}

.infocenter .last {
  width: 46px;
  padding-left: 4px;
  gap: 8px;
  border-left: 1px solid #bbb;
}

.ico18 {
  width: 16px;
  height: 16px;
  fill: none;
}

.navy {
  stroke: #27344f;
}

.window-buttons {
  display: flex;
  width: 162px;
  padding-left: 23px;
}

.window-buttons button {
  width: 46px;
}

.window-buttons svg {
  width: 10px;
  height: 10px;
  fill: none;
  stroke: #888;
}

.menubar {
  display: flex;
  flex: 1;
  align-items: center;
  gap: 22px;
  padding-left: 14px;
  color: #fff;
  border-top: 1px solid #444;
  background: linear-gradient(#999, #575757);
}

.doc-buttons {
  display: flex;
  gap: 4px;
  margin-left: auto;
  padding-right: 4px;
}

.doc-buttons svg {
  width: 12px;
  height: 12px;
  fill: none;
  stroke: #222;
  stroke-width: 2;
}

/* Drawing tabs */
.file-tabs {
  display: flex;
  align-items: flex-end;
  height: 25px;
  padding-left: 12px;
  background: var(--tabs);
}

.tab {
  display: flex;
  justify-content: space-between;
  height: 23px;
  margin-right: -10px;
  padding: 1px 16px 0 20px;
  line-height: 23px;
  color: #666;
  background: linear-gradient(#dcdcdc, #cecece);
  clip-path: polygon(0 100%, 5px 85%, 12px 15%, 18px 0, calc(100% - 15px) 0, calc(100% - 10px) 15%, calc(100% - 3px) 85%, 100% 100%);
}

.tab b {
  font-family: "DejaVu Sans", sans-serif;
  font-size: 10px;
  color: #777;
}

.tab.start { width: 140px; }
.tab:nth-child(2) { width: 273px; padding-left: 13px; padding-right: 18px; margin-right: -8px; }
.tab:nth-child(3) { width: 212px; padding-left: 12px; margin-right: -11px; }

.tab.active {
  width: 132px;
  padding-left: 16px;
  color: #111;
  background: #f5f5f5;
}

.add-tab {
  width: 24px;
  height: 14px;
  margin: 0 0 3px 14px;
  border-radius: 4px 12px 4px 12px;
  background: #e2e2e2;
  font-size: 16px;
  font-weight: bold;
  color: #555;
}

/* Toolbars */
.toolbars {
  display: flex;
  flex-direction: column;
  gap: 3px;
  padding: 4px 0;
}

.row {
  display: flex;
}

.toolbar {
  display: flex;
  height: 24px;
  border: 1px solid var(--edge);
  border-left-width: 0;
  background: var(--panel);
}

.toolbar button {
  width: 23px;
}

.toolbar.styles button {
  width: 24px;
}

.toolbar .more {
  width: 13px;
}

.toolbar svg, .dim-toolbar svg {
  width: 16px;
  height: 16px;
  fill: none;
  stroke: var(--icon);
}

.grip {
  width: 9px;
  border: 3px solid var(--panel);
  border-width: 4px 2px 4px 3px;
  background: repeating-linear-gradient(#555 0 1px, #ddd 1px 2px);
}

.grip.dark {
  border-color: #9b9da8;
}

.sep {
  width: 6px;
  padding: 1px 0;
}

.sep::before {
  content: "";
  display: block;
  width: 1px;
  height: 20px;
  margin-left: 3px;
  background: #000;
}

.combo {
  display: flex;
  align-items: center;
  width: 119px;
  padding: 0 7px 0 5px;
  border: 1px solid #bbb;
  background: #e1e1e1;
}

.combo select {
  flex: 1;
  min-width: 0;
  appearance: none;
}

.combo::after {
  content: "";
  width: 5px;
  height: 5px;
  margin-bottom: 3px;
  border: 1px solid #444;
  border-width: 0 1px 1px 0;
  transform: rotate(45deg);
}

.inset { padding-left: 17px; }
.combo.layer { width: 300px; padding: 0 4px; }
.combo.color { width: 150px; padding-left: 2px; }
.combo.linetype { width: 160px; }
.combo.weight { width: 124px; }
.combo.plot { width: 119px; padding-left: 9px; }

.combo.disabled {
  color: #888;
  background: #c9c9c9;
}

.combo select:disabled {
  opacity: 1;
}

.disabled::after {
  opacity: .3;
}

.layer .gap {
  margin-left: 4px;
}

.swatch {
  width: 13px;
  height: 13px;
  margin: 0 4px 0 2px;
  border: 1px solid #222;
  background: #5a5a5a;
}

.line {
  width: 60px;
  height: 1px;
  margin-right: 5px;
  background: #000;
}

.weight .line {
  width: 35px;
}

.refname {
  width: 139px;
  margin: 0 1px;
  border: 1px solid #555;
  border-width: 2px 1px 1px 2px;
  background: #efefef;
}

/* Workspace */
.workspace {
  flex: 1;
  display: grid;
  grid-template: minmax(0, 1fr) 19px / 29px minmax(0, 1fr) 17px;
}

.dim-toolbar {
  grid-row: 1 / 3;
  align-self: start;
  width: 25px;
  padding-bottom: 1px;
  border: 1px solid var(--edge);
  background: var(--panel);
}

.dim-toolbar button {
  width: 22px;
  height: 22px;
}

.dim-toolbar hr {
  height: 1px;
  margin: 2px 2px 3px;
  border: 0;
  background: #999;
}

.grip-h {
  display: block;
  height: 8px;
  border: 2px solid #9b9da8;
  background: repeating-linear-gradient(90deg, #444 0 1px, #ddd 1px 2px);
}

.viewport {
  position: relative;
  background: #000;
}

.drawing {
  display: block;
  width: 100%;
  height: 100%;
  fill: none;
}

.drawing path, .drawing use {
  shape-rendering: crispEdges;
}

.red { stroke: #f00; }
.thin { stroke: #bbb; }
.cursor { stroke: #fff; }

.lot {
  stroke: #f00;
  stroke-width: 4;
}

.ring {
  stroke: #f00;
}

.ticks {
  stroke: #f00;
  stroke-width: 3;
  stroke-dasharray: 1 1;
}

.ticks.long {
  stroke-width: 6;
  stroke-dasharray: 1 9;
}

.blk { fill: #fff; }
.ink { stroke: #fff; stroke-width: 2; }
.script { stroke: #fff; stroke-width: 2; }
.dots { fill: #aaa; }

.gua {
  stroke: #aaa;
  stroke-width: 3;
}

.lo {
  stroke: #f00;
}

.lbl, .palace, .road, .centre {
  font-family: "Liberation Sans", sans-serif;
  font-weight: bold;
  font-size: 7px;
  fill: #fff;
}

.palace {
  font-size: 6px;
  font-weight: normal;
}

.mid {
  text-anchor: middle;
}

.road {
  font-size: 11px;
}

.centre {
  font-size: 12px;
  text-anchor: middle;
}

.view-controls {
  position: absolute;
  top: 6px;
  left: 3px;
  color: #ccc;
}

.viewcube {
  position: absolute;
  top: 11px;
  right: 15px;
  display: flex;
  flex-direction: column;
  align-items: center;
  gap: 15px;
}

.viewcube svg {
  width: 136px;
  height: 144px;
  overflow: visible;
}

.viewcube circle {
  fill: none;
  stroke: #2b2b2b;
  stroke-width: 12;
}

.viewcube text {
  font-family: "Liberation Sans", sans-serif;
  font-size: 22px;
  font-weight: bold;
  text-anchor: middle;
  fill: #aaa;
}

.viewcube .face {
  fill: #b1b1b1;
  stroke: #888;
}

.viewcube .patch {
  fill: #a0a3a8;
}

.viewcube .face-name {
  font-size: 11px;
  fill: #434a50;
}

.viewcube button {
  width: 48px;
  height: 18px;
  gap: 6px;
  border: 1px solid #777;
  border-radius: 4px;
  background: #8d8d98;
  font-family: "Liberation Sans", sans-serif;
  font-size: 11px;
  color: #3a3a3a;
}

.viewcube .caret {
  border-top-color: #aaa;
}

.vscroll, .hscroll {
  display: flex;
  align-items: center;
  justify-content: space-between;
  padding: 7px 0;
}

.vscroll {
  flex-direction: column;
}

.hscroll {
  grid-column: 2;
  padding: 0 6px 2px;
}

.thumb {
  width: 15px;
  height: 17px;
  background: #cdcdcd;
}

.vscroll .thumb { margin-bottom: 382px; }

.hscroll .thumb {
  width: 17px;
  height: 15px;
  margin-left: auto;
  margin-right: 5px;
}

.arrow {
  width: 6px;
  height: 6px;
  border: 2px solid #555;
  border-width: 2px 0 0 2px;
}

.up { transform: rotate(45deg); }
.down { transform: rotate(225deg); }
.left { transform: rotate(-45deg); }
.right { transform: rotate(135deg); }

/* Command window */
.command {
  display: flex;
  height: 59px;
  border: 1px solid #777;
  border-bottom-width: 2px;
  background: #fff;
}

.handle {
  display: flex;
  flex-direction: column;
  align-items: center;
  gap: 7px;
  width: 24px;
  padding-top: 3px;
  background: linear-gradient(#8a8a8a, #3a3a3a);
}

.grip-h.light {
  width: 18px;
  height: 5px;
  flex: none;
  border: 0;
  background: repeating-linear-gradient(90deg, #aaa 0 2px, #777 2px 3px);
}

.handle button {
  height: 14px;
}

.handle svg {
  width: 14px;
  height: 14px;
  fill: none;
  stroke: #fff;
}

.lines {
  flex: 1;
  font-family: "Liberation Mono", monospace;
  font-size: 13px;
}

.lines p {
  height: 35px;
  margin: 0;
  padding: 15px 2px 0;
  border-bottom: 1px solid #777;
}

.lines label {
  display: flex;
  align-items: center;
  height: 21px;
  padding-left: 5px;
}

.lines svg {
  width: 16px;
  height: 12px;
  margin-right: 2px;
  stroke: #666;
  fill: none;
}

.lines .caret {
  border-width: 3px;
  border-bottom-width: 0;
}

.lines input {
  flex: 1;
  margin-left: 8px;
  font-style: italic;
}

.lines ::placeholder {
  color: #999;
}

/* Layout tabs */
.layout-tabs {
  display: flex;
  height: 28px;
  padding-left: 9px;
  background: var(--tabs);
}

.layout-tabs a {
  height: 17px;
  padding: 0 14px;
  margin-right: -6px;
  color: #666;
  background: #d8d8d8;
  clip-path: polygon(0 0, 100% 0, calc(100% - 4px) 75%, calc(100% - 9px) 100%, 9px 100%, 4px 75%);
}

.layout-tabs .active {
  font-weight: bold;
  color: #000;
  background: #fff;
}

.layout-tabs button {
  width: 23px;
  height: 16px;
  margin-left: 3px;
  border-radius: 10px 3px 10px 3px;
  background: #e4e4e4;
  font-size: 16px;
  font-weight: bold;
  color: #555;
}

/* Windows taskbar */
.taskbar {
  display: flex;
  height: 40px;
  color: #fff;
  background: #05090f;
}

.taskbar button {
  width: 48px;
}

.taskbar svg {
  width: 16px;
  height: 16px;
}

.taskbar .big {
  width: 24px;
  height: 24px;
}

.stroke {
  fill: none;
  stroke: #fff;
}

.divider {
  width: 4px;
  height: 16px;
  margin: 12px 0 0 6px;
  border: 1px solid #444;
  border-width: 0 1px;
}

.taskbar .app {
  width: 40px;
  margin: 0 5px 0 4px;
}

.taskbar .first {
  margin-left: 17px;
}

.taskbar .open {
  border-top: 2px solid transparent;
  border-bottom: 2px solid #76b9ed;
}

.taskbar .current {
  width: 48px;
  margin: 0 1px 0 0;
  background: #3a3f45;
}

.tray {
  display: flex;
  align-items: center;
  margin-left: auto;
}

.tray .divider {
  margin: 0 10px 0 0;
}

.chev {
  margin: -20px 13px 0 7px;
  font-size: 16px;
}

.taskbar .tray button {
  width: 36px;
}

.taskbar .tray .narrow {
  width: 24px;
}

.lang {
  margin: 0 12px 0 8px;
}

.tray time {
  display: flex;
  flex-direction: column;
  align-items: center;
  line-height: 18px;
}

.taskbar .tray .notify {
  position: relative;
  width: 40px;
  height: 40px;
  margin: 0 8px 0 6px;
}

.notify svg {
  width: 26px;
  height: 26px;
}

.notify em {
  position: absolute;
  right: 1px;
  bottom: 4px;
  width: 17px;
  height: 17px;
  border: 1px solid #999;
  border-radius: 50%;
  background: #333;
  font-style: normal;
  line-height: 15px;
}
```
